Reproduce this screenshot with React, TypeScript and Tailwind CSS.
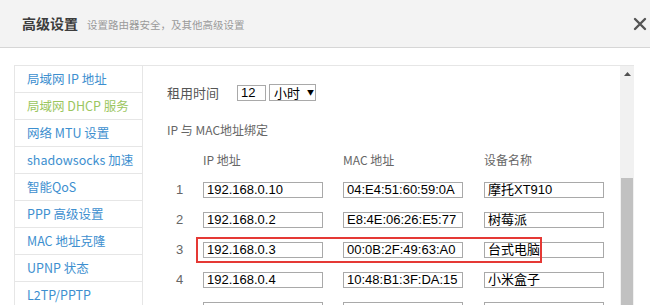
import React from 'react';

const menu = [
  { label: '局域网 IP 地址' },
  { label: '局域网 DHCP 服务', active: true },
  { label: '网络 MTU 设置' },
  { label: 'shadowsocks 加速' },
  { label: '智能QoS' },
  { label: 'PPP 高级设置' },
  { label: 'MAC 地址克隆' },
  { label: 'UPNP 状态' },
  { label: 'L2TP/PPTP' },
];

const rows = [
  { ip: '192.168.0.10', mac: '04:E4:51:60:59:0A', name: '摩托XT910' },
  { ip: '192.168.0.2', mac: 'E8:4E:06:26:E5:77', name: '树莓派' },
  { ip: '192.168.0.3', mac: '00:0B:2F:49:63:A0', name: '台式电脑', marked: true },
  { ip: '192.168.0.4', mac: '10:48:B1:3F:DA:15', name: '小米盒子' },
  { ip: '', mac: '', name: '', hidden: true },
];

const cjk = "font-['Microsoft_YaHei','Noto_Sans_CJK_SC',sans-serif]";

function Field({ value }: { value: string }) {
  return (
    <div className="w-[120px] h-[16px] border border-[#a9a9a9] bg-white pl-[3px] text-[13px] leading-[14px] text-black font-['Liberation_Sans','Noto_Sans_CJK_SC',sans-serif] whitespace-nowrap overflow-hidden">
      {value}
    </div>
  );
}

export default function App() {
  return (
    <div className={`w-[650px] h-[305px] overflow-hidden bg-white ${cjk}`}>
      {/* header */}
      <div className="h-[48px] bg-[#f3f3f3] border-b border-[#d6d6d6] flex items-center pl-[22px] pr-[3px]">
        <span className="text-[14px] font-bold text-[#3c3c3c]">高级设置</span>
        <span className="ml-[9px] text-[10.5px] text-[#9a9a9a] mt-[2px]">设置路由器安全，及其他高级设置</span>
        <svg className="ml-auto" width="14" height="14" viewBox="0 0 14 14">
          <path d="M2 2 L12 12 M12 2 L2 12" stroke="#555" strokeWidth="2.4" strokeLinecap="round" />
        </svg>
      </div>

      <div className="flex pt-[17px] pl-[14px] pr-[16px]">
        {/* sidebar */}
        <div className="w-[129px] border border-[#e6e6e6] border-b-0">
          {menu.map((m) => (
            <div
              key={m.label}
              className={`h-[27px] flex items-center pl-[12px] border-b border-[#e6e6e6] text-[12.5px] whitespace-nowrap ${
                m.active ? 'text-[#9bc65f]' : 'text-[#3d8fcf]'
              }`}
            >
              {m.label}
            </div>
          ))}
        </div>

        {/* content */}
        <div className="flex-1 flex border-t border-[#e6e6e6] h-[240px]">
          <div className="flex-1 pl-[24px]">
            <div className="mt-[18px] h-[17px] flex items-center text-[13px] text-[#555]">
              <span>租用时间</span>
              <div className="ml-[18px] w-[29px] h-[16px] border border-[#a9a9a9] pl-[3px] text-[13px] leading-[14px] text-black font-['Liberation_Sans',sans-serif]">12</div>
              <div className="ml-[3px] w-[47px] h-[17px] border border-[#a9a9a9] flex items-center pl-[4px] text-[13px] text-black">
                <span>小时</span>
                <span className="ml-[7px] text-[7px]">▼</span>
              </div>
            </div>

            <div className="mt-[20px] text-[12px] leading-[17px] text-[#666]">IP 与 MAC地址绑定</div>

            <div className="mt-[13px] flex text-[12px] leading-[17px] text-[#666]">
              <span className="ml-[36px] w-[140px]">IP 地址</span>
              <span className="w-[141px]">MAC 地址</span>
              <span>设备名称</span>
            </div>

            <div className="mt-[7px]">
              {rows.map((r, i) => (
                <div key={i} className="relative h-[30px] flex items-center">
                  <span className="w-[36px] pl-[9px] text-[13px] text-[#666] font-['Liberation_Sans',sans-serif]">
                    {r.hidden ? '' : i + 1}
                  </span>
                  <Field value={r.ip} />
                  <div className="ml-[20px]">
                    <Field value={r.mac} />
                  </div>
                  <div className="ml-[21px]">
                    <Field value={r.name} />
                  </div>
                  {r.marked && (
                    <div className="absolute left-[29px] top-[2px] w-[346px] h-[26px] border-2 border-[#e53935]" />
                  )}
                </div>
              ))}
            </div>
          </div>

          {/* scrollbar */}
          <div className="w-[14px] bg-[#f1f1f1] flex flex-col items-center">
            <svg className="mt-[6px]" width="7" height="5" viewBox="0 0 7 5">
              <path d="M3.5 0 L7 4 L0 4 Z" fill="#505050" />
            </svg>
            <div className="mt-[101px] w-[12px] flex-1 bg-[#c1c1c1]" />
          </div>
        </div>
      </div>
    </div>
  );
}
